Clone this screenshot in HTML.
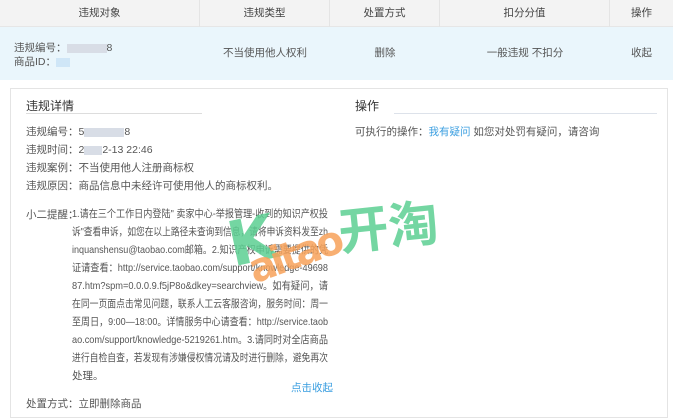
<!DOCTYPE html>
<html><head><meta charset="utf-8"><style>
*{margin:0;padding:0;box-sizing:border-box}
body{width:673px;height:410px;overflow:hidden;background:#fff;font-family:"Liberation Sans","Noto Sans CJK SC",sans-serif;font-size:10.5px;color:#555;position:relative}
.hd{position:absolute;left:0;top:0;width:673px;height:27px;background:#f3f3f3;border-bottom:1px solid #e6e6e6}
.hd div,.row div{position:absolute;text-align:center}
.hd div{top:0;line-height:27px;color:#444;border-right:1px solid #e4e4e4;height:27px}
.row{position:absolute;left:0;top:27px;width:673px;height:53px;background:#eaf6fc}
.row div{top:0;line-height:53px;color:#555}
.box{position:absolute;left:10px;top:88px;width:658px;height:330px;border:1px solid #e4e4e4;background:#fff}
.t{position:absolute;white-space:nowrap}
.blur{display:inline-block;background:#d8dde6;height:9px;vertical-align:middle}
.blue{color:#3a9ee0}
.wm{position:absolute;font-weight:bold;font-family:"DejaVu Sans","Noto Sans CJK SC",sans-serif;white-space:nowrap}
svg text{font-family:"Liberation Sans","Noto Sans CJK SC",sans-serif;font-size:10.5px;fill:#555}
</style></head><body>
<div class="hd">
<div style="left:0;width:200px">违规对象</div>
<div style="left:200px;width:130px">违规类型</div>
<div style="left:330px;width:110px">处置方式</div>
<div style="left:440px;width:170px">扣分分值</div>
<div style="left:610px;width:63px;border:none">操作</div>
</div>
<div class="row">
<div style="left:14px;top:14px;line-height:14px;text-align:left">违规编号：<span class="blur" style="width:40px"></span>8<br>商品ID：<span class="blur" style="width:14px;background:#cfe6f7"></span></div>
<div style="left:200px;width:130px">不当使用他人权利</div>
<div style="left:330px;width:110px">删除</div>
<div style="left:440px;width:170px">一般违规 不扣分</div>
<div style="left:610px;width:63px" class="blue">收起</div>
</div>
<div class="box"></div>
<div class="t" style="left:26px;top:97px;font-size:12px;color:#333">违规详情</div>
<div style="position:absolute;left:26px;top:113px;width:176px;height:1px;background:#ddd"></div>
<div class="t" style="left:355px;top:97px;font-size:12px;color:#333">操作</div>
<div style="position:absolute;left:394px;top:113px;width:263px;height:1px;background:#dde2ea"></div>
<div class="t" style="left:355px;top:124px">可执行的操作：<span class="blue">我有疑问</span> 如您对处罚有疑问，请咨询</div>
<div class="t" style="left:26px;top:124px">违规编号：5<span class="blur" style="width:40px"></span>8</div>
<div class="t" style="left:26px;top:142px">违规时间：2<span class="blur" style="width:18px"></span>2-13 22:46</div>
<div class="t" style="left:26px;top:160px">违规案例：不当使用他人注册商标权</div>
<div class="t" style="left:26px;top:178px">违规原因：商品信息中未经许可使用他人的商标权利。</div>
<div class="t" style="left:26px;top:207px">小二提醒：</div>
<svg style="position:absolute;left:72px;top:207px" width="260" height="180">
<text x="0" y="10" textLength="256" lengthAdjust="spacingAndGlyphs">1.请在三个工作日内登陆" 卖家中心-举报管理-收到的知识产权投</text>
<text x="0" y="28" textLength="256" lengthAdjust="spacingAndGlyphs">诉"查看申诉，如您在以上路径未查询到信息，请将申诉资料发至zh</text>
<text x="0" y="46" textLength="256" lengthAdjust="spacingAndGlyphs">inquanshensu@taobao.com邮箱。2.知识产权申诉需要提供的凭</text>
<text x="0" y="64" textLength="256" lengthAdjust="spacingAndGlyphs">证请查看：http://service.taobao.com/support/knowledge-49698</text>
<text x="0" y="82" textLength="256" lengthAdjust="spacingAndGlyphs">87.htm?spm=0.0.0.9.f5jP8o&amp;dkey=searchview。如有疑问，请</text>
<text x="0" y="100" textLength="256" lengthAdjust="spacingAndGlyphs">在同一页面点击常见问题，联系人工云客服咨询，服务时间：周一</text>
<text x="0" y="118" textLength="256" lengthAdjust="spacingAndGlyphs">至周日，9:00—18:00。详情服务中心请查看：http://service.taob</text>
<text x="0" y="136" textLength="256" lengthAdjust="spacingAndGlyphs">ao.com/support/knowledge-5219261.htm。3.请同时对全店商品</text>
<text x="0" y="154" textLength="256" lengthAdjust="spacingAndGlyphs">进行自检自查，若发现有涉嫌侵权情况请及时进行删除，避免再次</text>
<text x="0" y="172">处理。</text>
</svg>
<div class="t blue" style="left:291px;top:380px">点击收起</div>
<div class="t" style="left:26px;top:396px">处置方式：立即删除商品</div>
<div class="wm" style="left:228px;top:204px;font-size:62px;color:#5ccf92;transform:rotate(-12deg);opacity:.85">K</div>
<div class="wm" style="left:258px;top:247px;font-size:40px;color:#f7a25a;transform:rotate(-20deg);transform-origin:left bottom;opacity:.85;letter-spacing:-4px">aitao</div>
<div class="wm" style="left:338px;top:188px;font-size:50px;color:#5ccf92;opacity:.85;transform:rotate(-6deg)">开淘</div>
</body></html>
